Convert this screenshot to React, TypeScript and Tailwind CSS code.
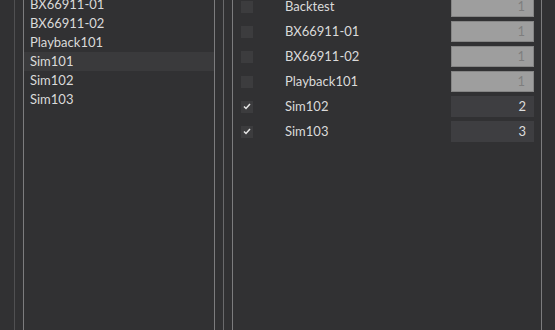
import React from "react";

const leftItems = ["BX66911-01", "BX66911-02", "Playback101", "Sim101", "Sim102", "Sim103"];
const rightItems = [
  { name: "Backtest", checked: false, value: "1" },
  { name: "BX66911-01", checked: false, value: "1" },
  { name: "BX66911-02", checked: false, value: "1" },
  { name: "Playback101", checked: false, value: "1" },
  { name: "Sim102", checked: true, value: "2" },
  { name: "Sim103", checked: true, value: "3" },
];

export default function App() {
  return (
    <div
      className="flex w-[555px] h-[330px] overflow-hidden bg-[#313133] text-[#dadada] text-[13px]"
      style={{ fontFamily: "Lato, 'Open Sans', sans-serif" }}
    >
      <div className="w-[14px] shrink-0" />
      <div className="w-[9px] shrink-0 border-l border-[#505052]" />
      <div className="w-[192px] shrink-0 border-x border-[#7c7c7e] overflow-hidden">
        <div className="-mt-[5px] flex flex-col">
          {leftItems.map((it) => (
            <div
              key={it}
              className={`h-[19px] flex items-center pl-[6px] ${it === "Sim101" ? "bg-[#3a3a3c]" : ""}`}
            >
              {it}
            </div>
          ))}
        </div>
      </div>
      <div className="w-[8px] shrink-0" />
      <div className="w-[9px] shrink-0 border-l border-[#6a6a6c]" />
      <div className="w-[310px] shrink-0 border-x border-[#7c7c7e] overflow-hidden">
        <div className="-mt-[4px] flex flex-col gap-[4px] pl-[8px] pr-[7px]">
          {rightItems.map((it) => (
            <div key={it.name} className="h-[21px] flex items-center">
              <div className="w-[12px] h-[12px] bg-[#3c3c3e] flex items-center justify-center shrink-0">
                {it.checked && (
                  <svg width="8" height="7" viewBox="0 0 8 7">
                    <polyline points="1,3.5 3,5.5 7,1" fill="none" stroke="#e6e6e6" strokeWidth="1.5" />
                  </svg>
                )}
              </div>
              <div className="ml-[32px] flex-1">{it.name}</div>
              <div
                className={`w-[83px] h-[21px] flex items-center justify-end pr-[8px] shrink-0 ${
                  it.checked
                    ? "bg-[#3e3e41] text-[#dcdcdc]"
                    : "bg-[#9e9e9e] text-[#7e7e7e] border border-[#858585]"
                }`}
              >
                {it.value}
              </div>
            </div>
          ))}
        </div>
      </div>
    </div>
  );
}
